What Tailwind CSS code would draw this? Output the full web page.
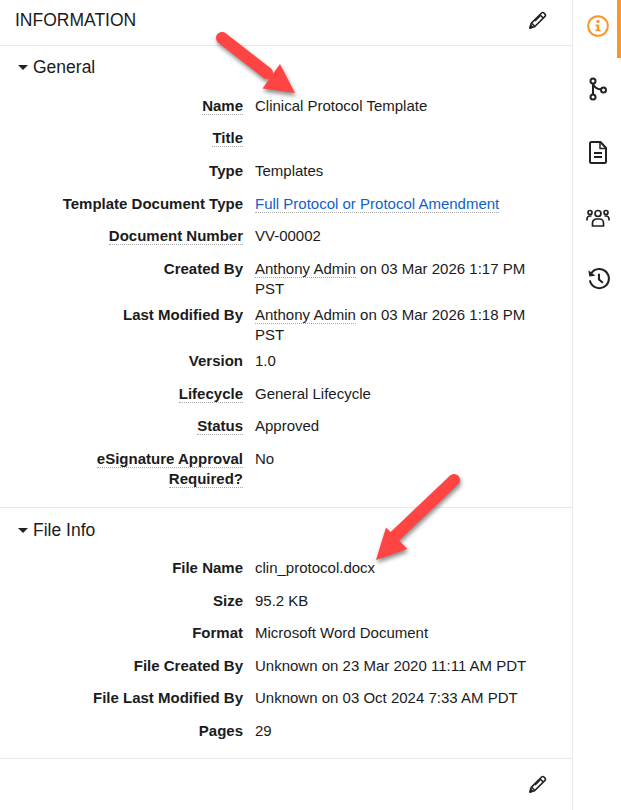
<!DOCTYPE html>
<html lang="en">
<head>
  <meta charset="UTF-8" />
  <title>Information</title>
  <script src="https://cdn.jsdelivr.net/npm/@tailwindcss/browser@4"></script>
</head>
<body class="bg-white font-['Liberation_Sans',Arial,sans-serif] text-[#1b1b1b] overflow-hidden">
<div class="relative flex h-[810px] w-[621px] overflow-hidden">

  <!-- Main panel -->
  <main class="w-[573px] shrink-0 border-r border-[#e9e9e9]">
    <header class="flex h-[46px] items-center justify-between border-b border-[#e9e9e9] pb-[5px] pl-[15px] pr-[24px]">
      <h1 class="text-[17.5px]">INFORMATION</h1>
      <svg class="h-[20px] w-[20px]" viewBox="0 0 20 20" fill="none" stroke="#222" stroke-width="1.6" stroke-linejoin="round"><path d="M2 18l1.2-4.6L13.6 3a1.6 1.6 0 0 1 2.3 0l1.1 1.1a1.6 1.6 0 0 1 0 2.3L6.6 16.8z"/><path d="M12 4.800l3.200 3.200M4 13.500l2.500 2.500M7 11l5-5"/><path d="M2 18l2.600-.7L2.700 15.400z" fill="#222"/></svg>
    </header>

    <!-- General -->
    <section class="h-[462px] border-b border-[#e9e9e9]">
      <div class="flex h-[43px] items-center pl-[18px]">
        <span class="mr-[5px] h-0 w-0 border-x-[5px] border-t-[5px] border-x-transparent border-t-[#222]"></span>
        <h2 class="text-[17.5px]">General</h2>
      </div>
      <dl class="mt-[6.8px] flex flex-col gap-[12.6px] text-[15px] leading-[20px]">
        <div class="flex"><dt class="w-[243px] text-right font-bold"><span class="border-b border-dotted border-[#aaa]">Name</span></dt><dd class="ml-[12px] w-[290px]">Clinical Protocol Template</dd></div>
        <div class="flex"><dt class="w-[243px] text-right font-bold"><span class="border-b border-dotted border-[#aaa]">Title</span></dt><dd class="ml-[12px] w-[290px]"></dd></div>
        <div class="flex"><dt class="w-[243px] text-right font-bold">Type</dt><dd class="ml-[12px] w-[290px]">Templates</dd></div>
        <div class="flex"><dt class="w-[243px] text-right font-bold">Template Document Type</dt><dd class="ml-[12px] w-[290px]"><span class="border-b border-dotted border-[#aaa] text-[#0f62c9]">Full Protocol or Protocol Amendment</span></dd></div>
        <div class="flex"><dt class="w-[243px] text-right font-bold"><span class="border-b border-dotted border-[#aaa]">Document Number</span></dt><dd class="ml-[12px] w-[290px]">VV-00002</dd></div>
        <div class="flex"><dt class="w-[243px] text-right font-bold">Created By</dt><dd class="ml-[12px] w-[290px]"><span class="border-b border-dotted border-[#aaa]">Anthony Admin</span> on 03 Mar 2026 1:17 PM PST</dd></div>
        <div class="-mt-[6.5px] flex"><dt class="w-[243px] text-right font-bold">Last Modified By</dt><dd class="ml-[12px] w-[290px]"><span class="border-b border-dotted border-[#aaa]">Anthony Admin</span> on 03 Mar 2026 1:18 PM PST</dd></div>
        <div class="-mt-[6.5px] flex"><dt class="w-[243px] text-right font-bold">Version</dt><dd class="ml-[12px] w-[290px]">1.0</dd></div>
        <div class="flex"><dt class="w-[243px] text-right font-bold"><span class="border-b border-dotted border-[#aaa]">Lifecycle</span></dt><dd class="ml-[12px] w-[290px]">General Lifecycle</dd></div>
        <div class="flex"><dt class="w-[243px] text-right font-bold"><span class="border-b border-dotted border-[#aaa]">Status</span></dt><dd class="ml-[12px] w-[290px]">Approved</dd></div>
        <div class="flex"><dt class="w-[243px] pl-[60px] text-right font-bold"><span class="border-b border-dotted border-[#aaa]">eSignature Approval Required?</span></dt><dd class="ml-[12px] w-[290px]">No</dd></div>
      </dl>
    </section>

    <!-- File Info -->
    <section class="h-[251px] border-b border-[#e9e9e9]">
      <div class="flex h-[44px] items-center pl-[18px]">
        <span class="mr-[5px] h-0 w-0 border-x-[5px] border-t-[5px] border-x-transparent border-t-[#222]"></span>
        <h2 class="text-[17.5px]">File Info</h2>
      </div>
      <dl class="mt-[6.1px] flex flex-col gap-[12.5px] text-[15px] leading-[20px]">
        <div class="flex"><dt class="w-[243px] text-right font-bold">File Name</dt><dd class="ml-[12px] w-[290px]">clin_protocol.docx</dd></div>
        <div class="flex"><dt class="w-[243px] text-right font-bold">Size</dt><dd class="ml-[12px] w-[290px]">95.2 KB</dd></div>
        <div class="flex"><dt class="w-[243px] text-right font-bold">Format</dt><dd class="ml-[12px] w-[290px]">Microsoft Word Document</dd></div>
        <div class="flex"><dt class="w-[243px] text-right font-bold">File Created By</dt><dd class="ml-[12px] w-[290px]">Unknown on 23 Mar 2020 11:11 AM PDT</dd></div>
        <div class="flex"><dt class="w-[243px] text-right font-bold">File Last Modified By</dt><dd class="ml-[12px] w-[290px]">Unknown on 03 Oct 2024 7:33 AM PDT</dd></div>
        <div class="flex"><dt class="w-[243px] text-right font-bold">Pages</dt><dd class="ml-[12px] w-[290px]">29</dd></div>
      </dl>
    </section>

    <div class="flex h-[50px] items-center justify-end pr-[24px]">
      <svg class="h-[20px] w-[20px]" viewBox="0 0 20 20" fill="none" stroke="#222" stroke-width="1.6" stroke-linejoin="round"><path d="M2 18l1.2-4.6L13.6 3a1.6 1.6 0 0 1 2.3 0l1.1 1.1a1.6 1.6 0 0 1 0 2.3L6.6 16.8z"/><path d="M12 4.800l3.200 3.200M4 13.500l2.500 2.500M7 11l5-5"/><path d="M2 18l2.600-.7L2.700 15.400z" fill="#222"/></svg>
    </div>
  </main>

  <!-- Side rail -->
  <nav class="relative flex flex-1 flex-col items-center gap-[39px] pl-[2px] pt-[14px]">
    <span class="absolute right-0 top-0 h-[58px] w-[4px] bg-[#f7982a]"></span>
    <div class="flex h-[24px] items-center justify-center">
      <svg class="h-[22px] w-[22px]" viewBox="0 0 22 22" fill="none"><circle cx="11" cy="11" r="9.800" stroke="#f7982a" stroke-width="2"/><circle cx="11" cy="6.500" r="1.700" fill="#f7982a"/><path d="M8.500 9.500h3.700v5h1.300v1.800H8.500v-1.800h1.300v-3.200H8.500z" fill="#f7982a"/></svg>
    </div>
    <div class="flex h-[24px] items-center justify-center">
      <svg class="h-[24px] w-[18px]" viewBox="0 0 18 24" fill="none" stroke="#222" stroke-width="2"><circle cx="4" cy="4" r="2.500"/><circle cx="4" cy="20" r="2.500"/><circle cx="14.500" cy="13" r="2.500"/><path d="M4 6.500v11M4.500 7.500q1 4 7.500 5"/></svg>
    </div>
    <div class="flex h-[24px] items-center justify-center">
      <svg class="h-[23px] w-[18px]" viewBox="0 0 18 23" fill="none" stroke="#222" stroke-width="2" stroke-linejoin="round"><path d="M2.500 1h9l5.500 6V20.500a1.500 1.500 0 0 1-1.500 1.500H2.500A1.500 1.500 0 0 1 1 20.500V2.500A1.500 1.500 0 0 1 2.500 1z"/><path d="M11 1v6.500h6" stroke-width="1.500"/><path d="M5 12h8M5 16h8" stroke-width="2.200"/></svg>
    </div>
    <div class="flex h-[24px] items-end justify-center">
      <svg class="h-[18px] w-[24px]" viewBox="0 0 24 18" fill="none" stroke="#222" stroke-width="1.700"><circle cx="12" cy="4.500" r="3"/><circle cx="4" cy="3.500" r="2"/><circle cx="20" cy="3.500" r="2"/><path d="M6.500 17v-3a4 4 0 0 1 4-4h3a4 4 0 0 1 4 4v3z"/><path d="M1 11.500V10a3 3 0 0 1 3-3h1.500M23 11.500V10a3 3 0 0 0-3-3h-1.500"/></svg>
    </div>
    <div class="flex h-[24px] items-center justify-center">
      <svg class="h-[23px] w-[23px]" viewBox="0 0 24 24" fill="none" stroke="#222" stroke-width="2.200"><path d="M4.500 6.500A10 10 0 1 1 3 14"/><path d="M1.500 3.500l.8 6.500 6.500-.8z" fill="#222" stroke="none"/><path d="M12.500 7v6l4 3.500"/></svg>
    </div>
  </nav>

  <!-- Annotation arrows -->
  <svg class="pointer-events-none absolute inset-0" width="621" height="810" viewBox="0 0 621 810" fill="none">
    <g class="drop-shadow-[1px_3px_2px_rgba(0,0,0,0.45)]">
      <path d="M222 38L267 73" stroke="#ff4444" stroke-width="12" stroke-linecap="round"/>
      <path d="M295 93L280 64L262.500 88.500z" fill="#ff4444"/>
      <path d="M454 480L393 538" stroke="#ff4444" stroke-width="12" stroke-linecap="round"/>
      <path d="M376 560L386 527.500L407.500 549z" fill="#ff4444"/>
    </g>
  </svg>
</div>
</body>
</html>
